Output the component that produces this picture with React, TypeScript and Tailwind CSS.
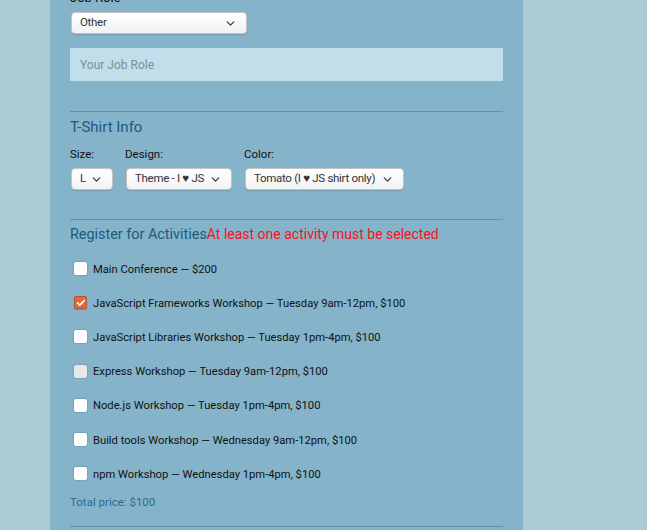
import { ChevronDown, Check } from "lucide-react";

const activities = [
  { label: "Main Conference — $200", checked: false, dim: false },
  { label: "JavaScript Frameworks Workshop — Tuesday 9am-12pm, $100", checked: true, dim: false },
  { label: "JavaScript Libraries Workshop — Tuesday 1pm-4pm, $100", checked: false, dim: false },
  { label: "Express Workshop — Tuesday 9am-12pm, $100", checked: false, dim: true },
  { label: "Node.js Workshop — Tuesday 1pm-4pm, $100", checked: false, dim: false },
  { label: "Build tools Workshop — Wednesday 9am-12pm, $100", checked: false, dim: false },
  { label: "npm Workshop — Wednesday 1pm-4pm, $100", checked: false, dim: false },
];

function Select({ value, width }: { value: string; width: string }) {
  return (
    <div
      className={`${width} h-[22px] flex items-center justify-between pl-[8px] pr-[9px] rounded-[4px] border border-[#c4c4c4] bg-gradient-to-b from-white to-[#f2f2f2] shadow-[0_1px_1px_rgba(0,0,0,0.15)] text-[11.5px] text-[#333] tracking-[-0.3px]`}
    >
      <span className="whitespace-nowrap">{value}</span>
      <ChevronDown className="w-[13px] h-[13px] text-[#444] shrink-0" strokeWidth={2.5} />
    </div>
  );
}

function Box({ checked, dim }: { checked: boolean; dim: boolean }) {
  if (checked) {
    return (
      <span className="w-[13px] h-[13px] rounded-[2px] bg-[#dd6a3c] border border-[#b8532c] flex items-center justify-center shadow-[0_1px_1px_rgba(0,0,0,0.2)]">
        <Check className="w-[10px] h-[10px] text-white" strokeWidth={4} />
      </span>
    );
  }
  return (
    <span
      className={`w-[13px] h-[13px] rounded-[2px] ${dim ? "bg-[#e6e8ea]" : "bg-white"} shadow-[0_0_2px_rgba(0,0,0,0.35)]`}
    />
  );
}

export default function App() {
  return (
    <div className="h-[530px] overflow-hidden bg-[#abcbd7] font-['Roboto',sans-serif]">
      <div className="flow-root ml-[50px] w-[473px] h-full bg-[#85b4ca] px-[20px]">
        <div className="-mt-[10px]">
          <label className="block text-[13px] leading-[16px] text-[#111] mb-[6px]">Job Role</label>
          <div className="pl-px">
            <Select value="Other" width="w-[176px]" />
          </div>
          <div className="mt-[14px] h-[33px] bg-[#c1dfea] flex items-center px-[10px] text-[12px] text-[#7f8d95]">
            Your Job Role
          </div>
        </div>

        <div className="mt-[30px] border-t border-[#5f93ad]" />
        <h3 className="mt-[6px] text-[15px] leading-[18px] text-[#1c5a80]">T-Shirt Info</h3>
        <div className="mt-[11px] flex">
          <div className="w-[55px]">
            <div className="text-[11.5px] leading-[14px] text-[#111]">Size:</div>
            <div className="mt-[7px] pl-px">
              <Select value="L" width="w-[42px]" />
            </div>
          </div>
          <div className="w-[119px]">
            <div className="text-[11.5px] leading-[14px] text-[#111]">Design:</div>
            <div className="mt-[7px] pl-px">
              <Select value="Theme - I ♥ JS" width="w-[106px]" />
            </div>
          </div>
          <div>
            <div className="text-[11.5px] leading-[14px] text-[#111]">Color:</div>
            <div className="mt-[7px] pl-px">
              <Select value="Tomato (I ♥ JS shirt only)" width="w-[159px]" />
            </div>
          </div>
        </div>

        <div className="mt-[29px] border-t border-[#5f93ad]" />
        <h3 className="mt-[5px] text-[14.4px] leading-[18px] text-[#1c5a80] whitespace-nowrap">
          Register for Activities
          <span className="text-[#f0141e] text-[14px]">At least one activity must be selected</span>
        </h3>
        <div className="mt-[9px] flex flex-col">
          {activities.map((a) => (
            <div key={a.label} className="h-[34.2px] flex items-center gap-[6px] pl-[4px]">
              <div className="-mt-[3px] flex">
                <Box checked={a.checked} dim={a.dim} />
              </div>
              <span className="text-[11.2px] text-[#111] whitespace-nowrap">{a.label}</span>
            </div>
          ))}
        </div>
        <div className="mt-[2px] text-[11.5px] text-[#2c6a8f]">Total price: $100</div>
        <div className="mt-[14px] border-t border-[#5f93ad]" />
      </div>
    </div>
  );
}
